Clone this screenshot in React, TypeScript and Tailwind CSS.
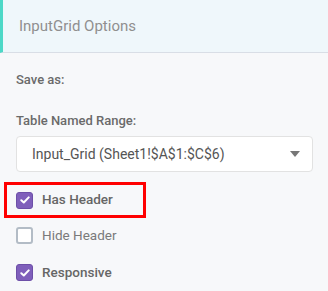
import React from "react";

const Check = ({ checked }: { checked: boolean }) =>
  checked ? (
    <span className="flex h-[17px] w-[17px] items-center justify-center rounded-[3px] border border-[#6d4fa8] bg-[#7f5fbb]">
      <svg width="10" height="8" viewBox="0 0 10 8" fill="none">
        <path d="M1.3 4.2 3.8 6.5 8.7 1.4" stroke="#fff" strokeWidth="2" strokeLinecap="round" strokeLinejoin="round" />
      </svg>
    </span>
  ) : (
    <span className="h-[17px] w-[17px] rounded-[3px] border-2 border-[#b3bcc6] bg-white" />
  );

const Option = ({ label, checked, bold }: { label: string; checked: boolean; bold?: boolean }) => (
  <div className="flex h-[17px] items-center gap-[9px]">
    <Check checked={checked} />
    <span className={`text-[13.5px] leading-none ${bold ? "font-medium text-[#666]" : "text-[#7a7a7a]"}`}>{label}</span>
  </div>
);

export default function App() {
  return (
    <div className="h-[291px] w-[328px] overflow-hidden bg-[#f7f8fa]" style={{ fontFamily: "Roboto, 'Liberation Sans', sans-serif" }}>
      <div className="flex h-[53px] items-center border-b border-l-[3px] border-b-[#d9dee6] border-l-[#4dd8c7] bg-[#eff7fb] pl-[16px]">
        <span className="text-[15px] text-[#8f8f8f]">InputGrid Options</span>
      </div>

      <div className="px-[16px]">
        <div className="pt-[17px] text-[13px] font-medium text-[#6a6a6a]">Save as:</div>

        <div className="pt-[21px] text-[13px] font-medium text-[#6a6a6a]">Table Named Range:</div>

        <div className="mt-[6px] flex h-[36px] w-[297px] items-center justify-between rounded-[4px] border border-[#e2e2e2] bg-white pl-[15px] pr-[12px]">
          <span className="text-[14px] text-[#555]">Input_Grid (Sheet1!$A$1:$C$6)</span>
          <svg width="10" height="6" viewBox="0 0 10 6">
            <path d="M0 0h10L5 6z" fill="#777" />
          </svg>
        </div>
      </div>

      <div className="ml-[4px] mt-[10px] flex h-[36px] w-[142px] items-center border-[3px] border-[#ff0000] pl-[9px]">
        <Option label="Has Header" checked bold />
      </div>

      <div className="mt-[9px] flex flex-col gap-[20px] px-[16px]">
        <Option label="Hide Header" checked={false} />
        <Option label="Responsive" checked bold />
      </div>
    </div>
  );
}
